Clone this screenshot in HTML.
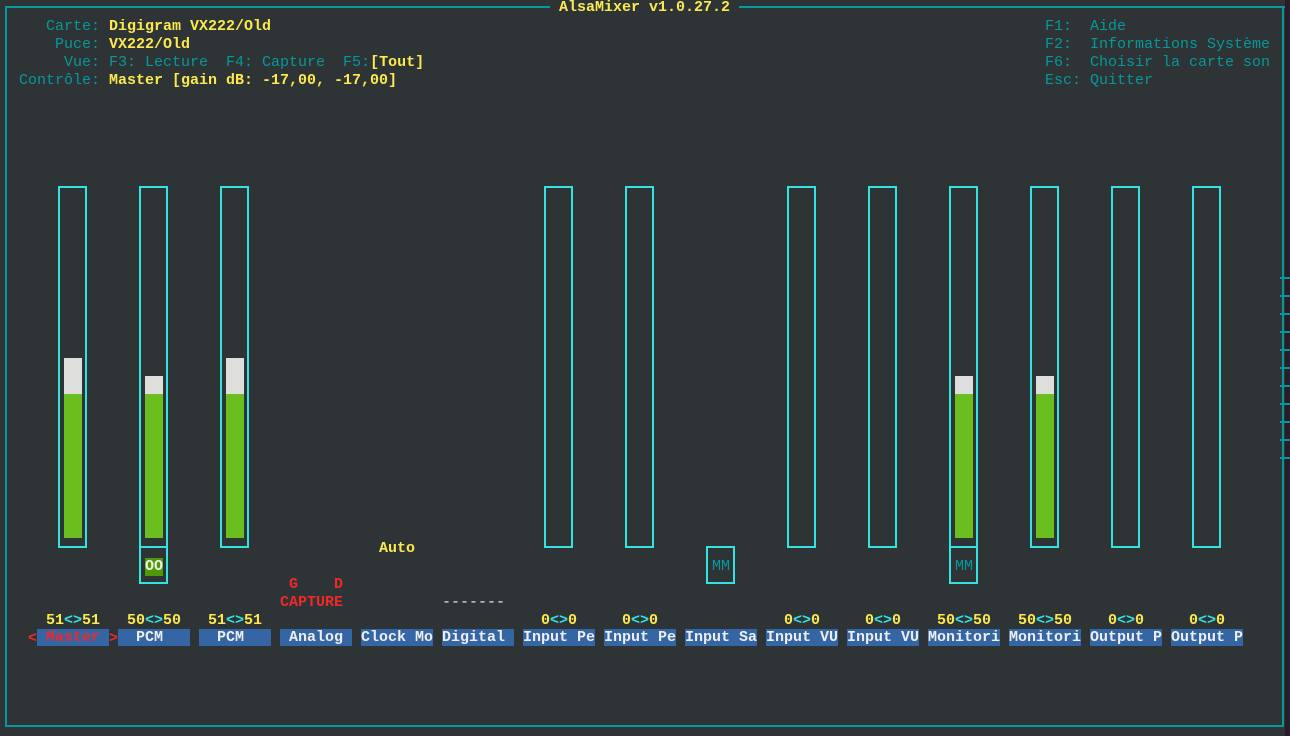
<!DOCTYPE html>
<html><head><meta charset="utf-8"><style>
body{margin:0;width:1290px;height:736px;background:#2e3436;position:relative;overflow:hidden;font-family:"Liberation Mono",monospace;font-size:15px;}
.t{position:absolute;white-space:pre;line-height:18px;height:18px;margin-top:2px}
.c{color:#06989a}.y{color:#fce94f;font-weight:bold}.r{color:#ef2929;font-weight:bold}.w{color:#eeeeec;font-weight:bold}.cy{color:#34e2e2;font-weight:bold}
.bd{position:absolute;background:#06989a}
.bar{position:absolute;border:2px solid #34e2e2;box-sizing:border-box;width:29px}
.g{position:absolute;background:#6abe1e}.wh{position:absolute;background:#dededc}
.lab{position:absolute;background:#3465a4;color:#eeeeec;font-weight:bold;height:17px;line-height:18px;width:72px;white-space:pre;top:629px;padding-top:0}
.tk{position:absolute;left:1280px;width:10px;height:2px;background:#06989a}
</style></head><body>
<div class="bd" style="left:5px;top:6px;width:1280px;height:2px"></div>
<div class="bd" style="left:5px;top:6px;width:2px;height:721px"></div>
<div class="bd" style="left:1282px;top:6px;width:2px;height:721px"></div>
<div class="bd" style="left:5px;top:725px;width:1279px;height:2px"></div>
<div style="position:absolute;left:1285px;top:0;width:5px;height:736px;background:#2a1b28"></div>
<div class="bd" style="left:1282px;top:250px;width:2px;height:18px"></div>
<div class="bd" style="left:1282px;top:466px;width:2px;height:18px"></div>
<div class="tk" style="top:277px"></div><div class="tk" style="top:295px"></div><div class="tk" style="top:313px"></div>
<div class="tk" style="top:331px"></div><div class="tk" style="top:349px"></div><div class="tk" style="top:367px"></div>
<div class="tk" style="top:385px"></div><div class="tk" style="top:403px"></div><div class="tk" style="top:421px"></div>
<div class="tk" style="top:439px"></div><div class="tk" style="top:457px"></div>
<div class="t y" style="left:550px;top:-3px;background:#2e3436"> AlsaMixer v1.0.27.2 </div>

<div class="t c" style="left:46px;top:16px">Carte: <span class="y">Digigram VX222/Old</span></div>
<div class="t c" style="left:55px;top:34px">Puce: <span class="y">VX222/Old</span></div>
<div class="t c" style="left:64px;top:52px">Vue: F3: Lecture  F4: Capture  F5:<span class="y">[Tout]</span></div>
<div class="t c" style="left:19px;top:70px">Contrôle: <span class="y">Master [gain dB: -17,00, -17,00]</span></div>

<div class="t c" style="left:1045px;top:16px">F1:  Aide</div>
<div class="t c" style="left:1045px;top:34px">F2:  Informations Système</div>
<div class="t c" style="left:1045px;top:52px">F6:  Choisir la carte son</div>
<div class="t c" style="left:1045px;top:70px">Esc: Quitter</div>

<div class="bar" style="left:58px;top:186px;height:362px"></div>
<div class="wh" style="left:64px;top:358px;width:18px;height:36px"></div><div class="g" style="left:64px;top:394px;width:18px;height:144px"></div>
<div class="bar" style="left:139px;top:186px;height:362px"></div>
<div class="wh" style="left:145px;top:376px;width:18px;height:18px"></div><div class="g" style="left:145px;top:394px;width:18px;height:144px"></div>
<div class="bar" style="left:139px;top:546px;height:38px"></div>
<div class="t w" style="left:145px;top:556px;background:#4e9a06">OO</div>
<div class="bar" style="left:220px;top:186px;height:362px"></div>
<div class="wh" style="left:226px;top:358px;width:18px;height:36px"></div><div class="g" style="left:226px;top:394px;width:18px;height:144px"></div>
<div class="bar" style="left:544px;top:186px;height:362px"></div>
<div class="bar" style="left:625px;top:186px;height:362px"></div>
<div class="bar" style="left:706px;top:546px;height:38px"></div>
<div class="t c" style="left:712px;top:556px">MM</div>
<div class="bar" style="left:787px;top:186px;height:362px"></div>
<div class="bar" style="left:868px;top:186px;height:362px"></div>
<div class="bar" style="left:949px;top:186px;height:362px"></div>
<div class="wh" style="left:955px;top:376px;width:18px;height:18px"></div><div class="g" style="left:955px;top:394px;width:18px;height:144px"></div>
<div class="bar" style="left:949px;top:546px;height:38px"></div>
<div class="t c" style="left:955px;top:556px">MM</div>
<div class="bar" style="left:1030px;top:186px;height:362px"></div>
<div class="wh" style="left:1036px;top:376px;width:18px;height:18px"></div><div class="g" style="left:1036px;top:394px;width:18px;height:144px"></div>
<div class="bar" style="left:1111px;top:186px;height:362px"></div>
<div class="bar" style="left:1192px;top:186px;height:362px"></div>

<div class="t y" style="left:379px;top:538px">Auto</div>
<div class="t r" style="left:289px;top:574px">G    D</div>
<div class="t r" style="left:280px;top:592px">CAPTURE</div>
<div class="t" style="left:442px;top:592px;color:#eeeeec">-------</div>

<div class="t y" style="left:46px;top:610px">51<span class="cy">&lt;&gt;</span>51</div>
<div class="t y" style="left:127px;top:610px">50<span class="cy">&lt;&gt;</span>50</div>
<div class="t y" style="left:208px;top:610px">51<span class="cy">&lt;&gt;</span>51</div>
<div class="t y" style="left:541px;top:610px">0<span class="cy">&lt;&gt;</span>0</div>
<div class="t y" style="left:622px;top:610px">0<span class="cy">&lt;&gt;</span>0</div>
<div class="t y" style="left:784px;top:610px">0<span class="cy">&lt;&gt;</span>0</div>
<div class="t y" style="left:865px;top:610px">0<span class="cy">&lt;&gt;</span>0</div>
<div class="t y" style="left:937px;top:610px">50<span class="cy">&lt;&gt;</span>50</div>
<div class="t y" style="left:1018px;top:610px">50<span class="cy">&lt;&gt;</span>50</div>
<div class="t y" style="left:1108px;top:610px">0<span class="cy">&lt;&gt;</span>0</div>
<div class="t y" style="left:1189px;top:610px">0<span class="cy">&lt;&gt;</span>0</div>

<div class="t r" style="left:28px;top:628px">&lt;</div>
<div class="lab" style="left:37px;color:#ef2929"> Master </div>
<div class="t r" style="left:109px;top:628px">&gt;</div>
<div class="lab" style="left:118px">  PCM   </div>
<div class="lab" style="left:199px">  PCM   </div>
<div class="lab" style="left:280px"> Analog </div>
<div class="lab" style="left:361px">Clock Mo</div>
<div class="lab" style="left:442px">Digital </div>
<div class="lab" style="left:523px">Input Pe</div>
<div class="lab" style="left:604px">Input Pe</div>
<div class="lab" style="left:685px">Input Sa</div>
<div class="lab" style="left:766px">Input VU</div>
<div class="lab" style="left:847px">Input VU</div>
<div class="lab" style="left:928px">Monitori</div>
<div class="lab" style="left:1009px">Monitori</div>
<div class="lab" style="left:1090px">Output P</div>
<div class="lab" style="left:1171px">Output P</div>
</body></html>
